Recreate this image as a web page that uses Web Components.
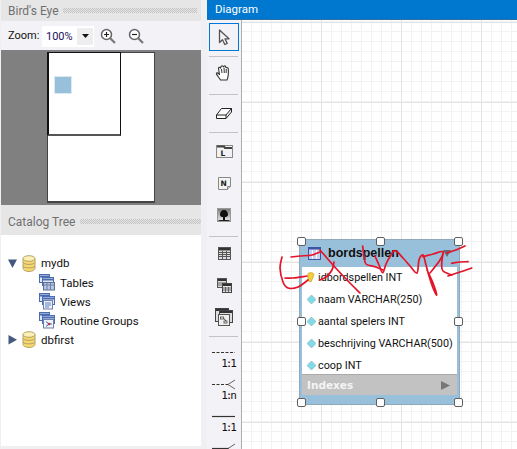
<!DOCTYPE html>
<html><head><meta charset="utf-8">
<style>
html,body{margin:0;padding:0;background:#f0f0f2;overflow:hidden;width:517px;height:449px;font-family:Roboto,"Open Sans",sans-serif;font-size:12px;color:#111}
</style></head>
<body>
<app-shell>
  <side-panel slot="side">
    <panel-title style="--tw:50px">Bird's Eye</panel-title>
    <zoom-bar></zoom-bar>
    <bird-view></bird-view>
    <panel-title tall style="--tw:67px">Catalog Tree</panel-title>
    <catalog-tree>
      <tree-row kind="db" open>mydb</tree-row>
      <tree-row kind="tables" child>Tables</tree-row>
      <tree-row kind="views" child>Views</tree-row>
      <tree-row kind="routines" child>Routine Groups</tree-row>
      <tree-row kind="db" closed>dbfirst</tree-row>
    </catalog-tree>
  </side-panel>
  <diagram-pane slot="main">
    <tool-bar slot="tools"></tool-bar>
    <diagram-canvas slot="canvas">
      <table-node name="bordspellen" style="left:57px;top:219px">
        <table-column key>idbordspellen INT</table-column>
        <table-column>naam VARCHAR(250)</table-column>
        <table-column>aantal spelers INT</table-column>
        <table-column>beschrijving VARCHAR(500)</table-column>
        <table-column>coop INT</table-column>
      </table-node>
      <red-scribble></red-scribble>
    </diagram-canvas>
  </diagram-pane>
</app-shell>
<script>
function def(name, html){
  customElements.define(name, class extends HTMLElement{
    constructor(){super();const s=this.attachShadow({mode:'open'});s.innerHTML=typeof html==='function'?html(this):html;}
  });
}
def('app-shell',`<style>:host{display:flex;width:517px;height:449px;overflow:hidden}
.s{width:201px;flex:none}.g{width:6px;flex:none}.m{flex:1;min-width:0}</style>
<div class="s"><slot name="side"></slot></div><div class="g"></div><div class="m"><slot name="main"></slot></div>`);

def('side-panel',`<style>:host{display:block;padding-left:1px;width:200px}</style><slot></slot>`);

def('panel-title',`<style>:host{display:flex;align-items:center;height:21px;background:#e6e6e6;color:#707070;font-size:12px;padding-left:7px;box-sizing:border-box}
:host([tall]){height:30px;padding-top:3px}
.t{white-space:nowrap;width:var(--tw);letter-spacing:0}
.d{flex:1;height:5px;margin-left:5px;margin-right:4px;background-image:conic-gradient(#c2c2c2 25%,transparent 0 50%,#c2c2c2 0 75%,transparent 0);background-size:2px 2px}
:host([tall]) .d{margin-right:0}
</style><span class="t"><slot></slot></span><span class="d"></span>`);

def('zoom-bar',`<style>:host{display:flex;align-items:center;height:29px;background:#f3f3f7;padding-left:7px;box-sizing:border-box;font-size:11px;color:#111}
.l{width:30px;white-space:nowrap}
.c{display:flex;width:52px;height:21px;background:#fff;margin-left:4px;margin-top:1px;align-items:center;box-sizing:border-box;padding:2px 1px 2px 4px;color:#1a1060}
.c span{flex:1}
.a{width:16px;height:17px;background:#eee;display:flex;align-items:center;justify-content:center}
svg{display:block;flex:none}
.i{margin-left:6px}
.o{margin-left:12px}
</style><span class="l">Zoom:</span>
<div class="c"><span>100%</span><div class="a"><svg width="7" height="4"><path d="M0 0H7L3.500 4Z" fill="#111"/></svg></div></div>
<svg class="i" width="16" height="16"><circle cx="6.500" cy="6.500" r="5" fill="#fff" stroke="#666" stroke-width="1.500"/><path d="M10.200 10.200L15 15" stroke="#777" stroke-width="2.200"/><path d="M4 6.500H9M6.500 4V9" stroke="#222" stroke-width="1.200"/></svg>
<svg class="o" width="16" height="16"><circle cx="6.500" cy="6.500" r="5" fill="#fff" stroke="#666" stroke-width="1.500"/><path d="M10.200 10.200L15 15" stroke="#777" stroke-width="2.200"/><path d="M4 6.500H9" stroke="#222" stroke-width="1.200"/></svg>`);

def('bird-view',`<style>:host{display:block;position:relative;height:155px;background:#808080}
.p{position:absolute;left:46px;top:2px;width:108px;height:151px;background:#fff;border:1px solid #444;border-bottom-width:2px;box-sizing:border-box}
.v{position:absolute;left:46px;top:2px;width:74px;height:84px;box-sizing:border-box;border:1px solid #111;border-left-width:2px;border-bottom:2px solid #555}
.b{position:absolute;left:53px;top:26px;width:18px;height:18px;background:#99c0da;box-sizing:border-box;border:1px solid #dceaf3}
</style><div class="p"></div><div class="v"></div><div class="b"></div>`);

def('catalog-tree',`<style>:host{display:block;background:#fff;height:211px;padding-top:18px;box-sizing:border-box}</style><slot></slot>`);

const ic={
 db:`<svg width="14" height="17" viewBox="0 0 14 17"><path d="M1 3.500V13.500C1 15 4 16.500 7 16.500S13 15 13 13.500V3.500Z" fill="#f8d76c" stroke="#b0a46a"/><ellipse cx="7" cy="3.500" rx="6" ry="2.800" fill="#fdf0b5" stroke="#b0a46a"/><path d="M1 7.500C2 10 12 10 13 7.500M1 11C2 13.500 12 13.500 13 11" fill="none" stroke="#b0a46a"/></svg>`,
 tables:`<svg width="17" height="17" viewBox="0 0 17 17"><rect x=".500" y=".500" width="10" height="8" fill="#dfe8f7" stroke="#4a6cb0"/><path d="M1 2.500H10" stroke="#4a6cb0" stroke-width="2"/><rect x="3.500" y="3.500" width="11" height="8" fill="#dfe8f7" stroke="#4a6cb0"/><path d="M4 5.500H14" stroke="#4a6cb0" stroke-width="2"/><rect x="4.500" y="8.500" width="11" height="7.500" fill="#b5c7e6" stroke="#5f6f90"/><path d="M8 9V16M11.500 9V16M5 11H15" stroke="#6f80a5"/></svg>`,
 views:`<svg width="17" height="17" viewBox="0 0 17 17"><rect x=".500" y=".500" width="10" height="8" fill="#dfe8f7" stroke="#4a6cb0"/><path d="M1 2.500H10" stroke="#4a6cb0" stroke-width="2"/><rect x="3.500" y="3.500" width="12" height="8" fill="#dfe8f7" stroke="#4a6cb0"/><path d="M4 5.500H15" stroke="#4a6cb0" stroke-width="2"/><rect x="4.500" y="7.500" width="9" height="8.500" fill="#eef2fa" stroke="#6f80a5"/><path d="M6 10H12M6 12H12M6 14H10" stroke="#5a7fc0"/></svg>`,
 routines:`<svg width="17" height="17" viewBox="0 0 17 17"><rect x=".500" y=".500" width="10" height="8" fill="#dfe8f7" stroke="#4a6cb0"/><path d="M1 2.500H10" stroke="#4a6cb0" stroke-width="2"/><rect x="3.500" y="3.500" width="12" height="8" fill="#dfe8f7" stroke="#4a6cb0"/><path d="M4 5.500H15" stroke="#4a6cb0" stroke-width="2"/><rect x="4.500" y="7.500" width="10" height="8.500" fill="#eef2fa" stroke="#6f80a5"/><path d="M7 9.500L10 12L7 14.500M10 12H13" stroke="#4060b0" fill="none"/><circle cx="10" cy="12" r="1.300" fill="#b03a3a"/></svg>`
};
def('tree-row',h=>`<style>:host{display:flex;align-items:center;height:19px;font-size:11.500px;color:#111;padding-left:7px}
:host([open]){height:20px}
:host([child]){padding-left:38px}
.t{width:14px;flex:none;display:block}
.i{display:flex;width:19px;flex:none}
:host([child]) .i{width:21px}
</style>${h.hasAttribute('child')?'':`<svg class="t" width="14" height="11" viewBox="0 0 14 11">${h.hasAttribute('open')?'<path d="M0 1.500H9L4.500 10Z" fill="#44597f"/>':'<path d="M.500 1V10.500L9 5.700Z" fill="#44597f"/>'}</svg>`}<span class="i">${ic[h.getAttribute('kind')]}</span><span><slot></slot></span>`);

def('diagram-pane',`<style>:host{display:flex;flex-direction:column;height:449px;background:#f3f3f7}
.h{height:20px;flex:none;background:#0078d0;color:#fff;font-size:11.500px;padding-left:8px;line-height:18px;box-sizing:border-box;border-bottom:1px solid #2d6ea3}
.b{flex:1;display:flex;min-height:0}
</style><div class="h">Diagram</div><div class="b"><slot name="tools"></slot><slot name="canvas"></slot></div>`);

const T={
 pointer:`<svg width="16" height="17" viewBox="0 0 16 17"><path d="M3.500 1V13.500L6.500 10.700L8.800 15.500L11.200 14.400L9 9.800H13Z" fill="#f2f2f2" stroke="#555" stroke-width="1.300" stroke-linejoin="round"/></svg>`,
 hand:`<svg width="18" height="18" viewBox="0 0 18 18"><path d="M5.500 16C4.500 14 2 11.500 1.500 10C1 8.500 2.800 8.500 3.800 9.800L4.500 10.500L3.500 4.500C3.300 3 5 2.800 5.400 4.200L6 2.800C6.300 1.300 8 1.300 8.200 2.800L9 2.200C9.800 1.500 10.800 2 10.800 3.300L11.500 3.800C12.500 3.300 13.500 4 13.300 5.300C13.500 8 13.800 12 12 16Z" fill="#fff" stroke="#333" stroke-width="1.100" stroke-linejoin="round"/><path d="M6.500 5L7 9M9 3.500L9.300 9M11.200 5L11.200 9" stroke="#333" fill="none"/></svg>`,
 eraser:`<svg width="16" height="11" viewBox="0 0 16 11"><path d="M.500 7L5.500 .500H15.500L10 7V10.500H.500Z" fill="#fff" stroke="#222"/><path d="M.500 7H10M10 10.500L15.500 4V.500" fill="none" stroke="#222"/></svg>`,
 layer:`<svg width="17" height="13" viewBox="0 0 17 13"><rect x=".500" y=".500" width="16" height="12" fill="#f2f2f2" stroke="#888"/><path d="M1 1.500H8L9 3H16" stroke="#444" stroke-width="2" fill="none"/><text x="4.500" y="11" font-family="DejaVu Sans" font-weight="bold" font-size="7.500" fill="#222">L</text></svg>`,
 note:`<svg width="13" height="13" viewBox="0 0 13 13"><path d="M.500 .500H12.500V9.500L9.500 12.500H.500Z" fill="#f4f4f4" stroke="#888"/><text x="2.500" y="9" font-family="DejaVu Sans" font-weight="bold" font-size="7.500" fill="#222">N</text><path d="M12.500 9.500H9.500V12.500" fill="#ccc" stroke="#888"/></svg>`,
 image:`<svg width="14" height="14" viewBox="0 0 14 14"><defs><linearGradient id="g" x1="0" y1="0" x2="0" y2="1"><stop offset="0" stop-color="#777"/><stop offset="1" stop-color="#eee"/></linearGradient></defs><rect x=".500" y=".500" width="13" height="13" fill="url(#g)" stroke="#999"/><path d="M7 2C4.500 2 2.800 4 3 7C3.200 8.500 4.500 9 6 9V12H8V9C9.500 9 10.800 8.500 11 7C11.200 4 9.500 2 7 2Z" fill="#111"/><path d="M1.500 12.500H12.500" stroke="#222"/></svg>`,
 table:`<svg width="13" height="13" viewBox="0 0 13 13"><rect x=".500" y=".500" width="12" height="12" fill="#ddd" stroke="#555"/><path d="M1 2.200H12" stroke="#333" stroke-width="2.500"/><path d="M1 5.500H12M1 7.500H12M1 9.500H12M4.500 4V12M8.500 4V12" stroke="#555"/></svg>`,
 view:`<svg width="15" height="15" viewBox="0 0 15 15"><rect x=".500" y=".500" width="9" height="9" fill="#ddd" stroke="#555"/><path d="M1 2H9" stroke="#333" stroke-width="2"/><path d="M1 5H9M1 7H9" stroke="#666"/><rect x="5.500" y="5.500" width="9" height="9" fill="#e6e6e6" stroke="#444"/><path d="M6 7H14" stroke="#333" stroke-width="2"/><path d="M6 10H14M6 12H14M8.500 9V14M11.500 9V14" stroke="#666"/></svg>`,
 routine:`<svg width="18" height="18" viewBox="0 0 18 18"><rect x=".500" y=".500" width="13" height="13" fill="#ddd" stroke="#444"/><path d="M1 2H13" stroke="#333" stroke-width="2"/><rect x="4.500" y="2.500" width="13" height="12" fill="#ddd" stroke="#444"/><path d="M5 4H17" stroke="#333" stroke-width="2"/><rect x="3.500" y="6.500" width="11" height="11" fill="#eee" stroke="#555"/><rect x="5.500" y="9" width="3" height="2" fill="#fff" stroke="#444" stroke-width=".8"/><rect x="9" y="13" width="3" height="2" fill="#fff" stroke="#444" stroke-width=".8"/><path d="M8.500 10L11 13" stroke="#444"/></svg>`
};
function line(kind){
 const dash=kind==='d1'||kind==='dn', crow=kind==='dn'||kind==='sn';
 return `<svg width="26" height="9" viewBox="0 0 26 9" style="display:block;overflow:visible"><path d="M1 3.500H${crow?18:24}" stroke="#333" stroke-width="${dash?1:1.200}" ${dash?'stroke-dasharray="3 1.500"':''} fill="none"/>${crow?'<path d="M24 -1L17 3.500L24 8" stroke="#666" fill="none"/>':''}</svg>`;
}
def('tool-bar',`<style>:host{display:block;width:34px;flex:none;background:#f3f3f7;border-right:1px solid #aeaeae;box-sizing:content-box;overflow:hidden;padding-top:3px}
.sep{height:1px;background:#c3c3c3;margin:0 3px 0 2px}
.t{display:flex;align-items:center;justify-content:center}
.sel{height:28px;margin:0 2px;box-sizing:border-box;border:1px solid #0078d7}
.r{height:32px;display:flex;flex-direction:column;box-sizing:border-box}
.ln{align-self:center;display:block;height:9px}
.txt{align-self:flex-end;padding-right:6px;font:11px/11px "DejaVu Sans Mono","Liberation Mono",monospace;letter-spacing:-2px;color:#111}
</style>
<div class="t sel">${T.pointer}</div>
<div style="height:5px"></div><div class="sep"></div>
<div class="t" style="height:32px">${T.hand}</div>
<div style="height:5px"></div><div class="sep"></div>
<div class="t" style="height:36px">${T.eraser}</div>
<div style="height:1px"></div><div class="sep"></div>
<div class="t" style="height:36px">${T.layer}</div>
<div class="t" style="height:28px">${T.note}</div>
<div class="t" style="height:36px">${T.image}</div>
<div style="height:3px"></div><div class="sep"></div>
<div class="t" style="height:32px">${T.table}</div>
<div class="t" style="height:32px">${T.view}</div>
<div class="t" style="height:32px">${T.routine}</div>
<div style="height:3px"></div><div class="sep"></div>
<div style="height:12px"></div>
<div class="r"><span class="ln">${line('d1')}</span><span class="txt">1:1</span></div>
<div class="r"><span class="ln">${line('dn')}</span><span class="txt">1:n</span></div>
<div class="r"><span class="ln">${line('s1')}</span><span class="txt">1:1</span></div>
<div class="r"><span class="ln">${line('sn')}</span></div>`);

def('diagram-canvas',`<style>:host{display:block;position:relative;flex:1;min-width:0;overflow:hidden;background-color:#fff;
background-image:
linear-gradient(to right,#e4e4e4 1px,transparent 1px),
linear-gradient(to bottom,#e4e4e4 1px,transparent 1px),
linear-gradient(to right,#f2f2f2 1px,transparent 1px),
linear-gradient(to bottom,#f2f2f2 1px,transparent 1px);
background-size:80px 80px,80px 80px,10px 10px,10px 10px;
background-position:79px 0,0 2px,9px 0,0 1px}
</style><slot></slot>`);

def('table-node',h=>`<style>:host{display:block;position:absolute;width:161px;height:166px;background:#99c0da;box-sizing:border-box;border:1px solid #8fa9bb;padding:0 2px}
.h{height:27px;display:flex;align-items:center;padding-left:6px;font:bold 12.500px/1 "Liberation Sans",sans-serif;color:#111}
.h svg{margin-right:7px;flex:none}
.tr{position:absolute;left:143px;top:10px}
.b{background:#fff;height:107px;box-sizing:border-box}
.in{position:relative;top:-1px}
.x{height:21px;background:#c2c2c2;color:#f4f4f4;font:bold 10.500px/20px "DejaVu Sans",sans-serif;padding-left:5px;position:relative;border-top:1px solid #aaa;box-sizing:border-box}
.x svg{position:absolute;right:7px;top:6px}
x-handle{position:absolute}
</style>
<div class="h"><svg width="13" height="13" viewBox="0 0 13 13"><rect x=".500" y=".500" width="12" height="12" fill="#c7d0ee" stroke="#3c55a5"/><path d="M1 1.500H12" stroke="#3c55a5" stroke-width="2"/><path d="M4.500 3V12M8.500 3V12" stroke="#fff"/></svg><span>${h.getAttribute('name')}</span></div>
<svg class="tr" width="8" height="7"><path d="M0 0H8L4 7Z" fill="#667"/></svg>
<div class="b"><div class="in"><slot></slot></div></div>
<div class="x">Indexes<svg width="9" height="9"><path d="M0 0V9L9 4.500Z" fill="#777"/></svg></div>
<x-handle style="left:-3px;top:-3px"></x-handle><x-handle style="left:76px;top:-3px"></x-handle><x-handle style="left:154px;top:-3px"></x-handle>
<x-handle style="left:-3px;top:77px"></x-handle><x-handle style="left:154px;top:77px"></x-handle>
<x-handle style="left:-3px;top:158px"></x-handle><x-handle style="left:76px;top:158px"></x-handle><x-handle style="left:154px;top:158px"></x-handle>`);

def('x-handle',`<style>:host{display:block;width:9px;height:9px;background:#fff;border:1.500px solid #5f5f5f;border-radius:2px;box-sizing:border-box}</style>`);

def('table-column',h=>`<style>:host{display:flex;align-items:center;height:22px;font-size:10.800px;color:#111;padding-left:5px;white-space:nowrap}
svg{margin-right:2px;flex:none}</style>${h.hasAttribute('key')
?`<svg width="9" height="11" viewBox="0 0 9 11"><path d="M1 1.500C3 0 6.500 .500 7 2.500L4 10L1 8.500Z" fill="#f3cf3d" stroke="#c9a422" stroke-width=".8"/></svg>`
:`<svg width="9" height="9" viewBox="0 0 9 9"><path d="M4.500 0L9 4.500L4.500 9L0 4.500Z" fill="#7fdbe6" stroke="#8fb5c0" stroke-width=".7"/></svg>`}<span><slot></slot></span>`);

function smooth(p){
  let d=`M${p[0][0]} ${p[0][1]}`;
  for(let i=0;i<p.length-1;i++){
    const a=p[Math.max(i-1,0)],b=p[i],c=p[i+1],e=p[Math.min(i+2,p.length-1)];
    const f=v=>v.toFixed(1);
    d+=`C${f(b[0]+(c[0]-a[0])/6)} ${f(b[1]+(c[1]-a[1])/6)} ${f(c[0]-(e[0]-b[0])/6)} ${f(c[1]-(e[1]-b[1])/6)} ${c[0]} ${c[1]}`;
  }
  return d;
}
const strokes=[
 [[291,257],[300,256],[312,255],[320,252]],
 [[282,257],[280,268],[283,282],[288,288],[298,287],[308,280]],
 [[285,278],[293,278],[307,276]],
 [[320,250],[333,265],[347,280],[360,293]],
 [[334,262],[332,270],[326,277],[320,280]],
 [[362.7,246],[364,256],[366,264],[375,266.7],[383,270]],
 [[375,256],[379,265],[382.7,272.7],[386,264],[390,256.7],[395,250.7],[403,258],[410,266],[417,273],[419,260],[423,255],[426,265],[429,276],[433,288],[436.7,295],[433,283],[427,270]],
 [[423,256.7],[433,254],[443,251.7],[440,260],[430,273]],
 [[443,253],[441.7,264],[443,271],[451.7,275]],
 [[446.7,253],[456,250],[465,246]],
 [[451.7,263.3],[460,262],[468,261.7]],
 [[448,276],[460,272],[471.7,268]]
];
def('red-scribble',`<style>:host{position:absolute;left:0;top:0;pointer-events:none}svg{display:block;overflow:visible}</style>
<svg width="275" height="429" viewBox="242 20 275 429" fill="none" stroke="#e4142a" stroke-width="1.700" stroke-linecap="round" stroke-linejoin="round">
${strokes.map(p=>`<path d="${smooth(p)}"/>`).join('')}
</svg>`);
</script>
</body></html>
